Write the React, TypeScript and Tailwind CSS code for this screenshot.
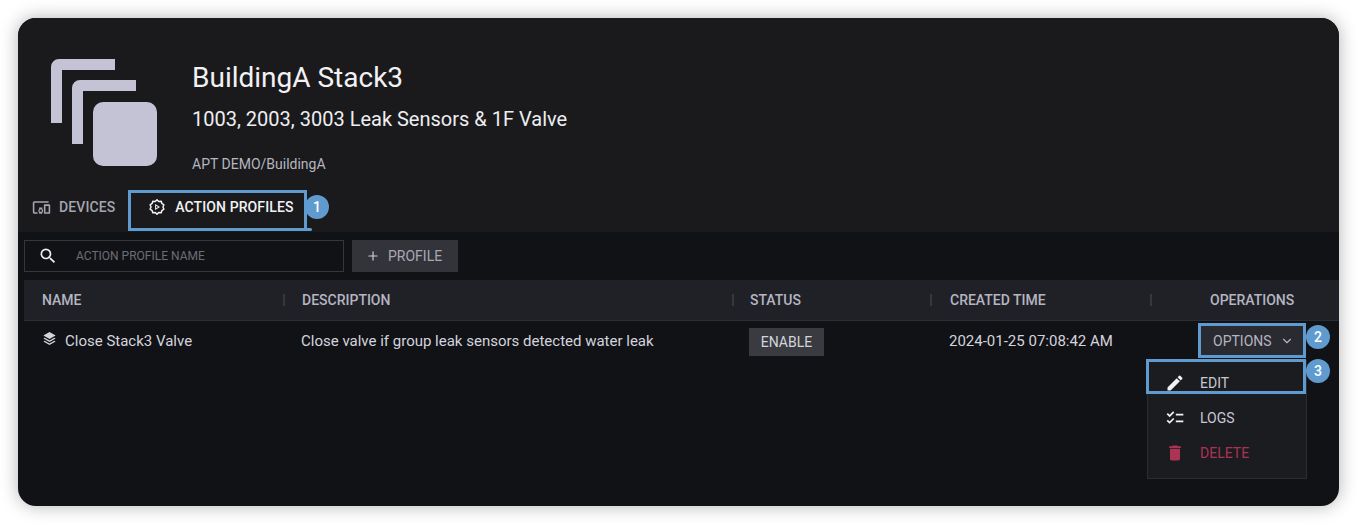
import { MdDelete, MdEdit, MdOutlineDevicesOther, MdOutlineChecklist, MdSearch } from "react-icons/md";
import { ChevronDown, Plus } from "lucide-react";

const columns = [
  { label: "NAME", sep: false, pad: "pl-[18px]" },
  { label: "DESCRIPTION", sep: true, pad: "pl-[17px]" },
  { label: "STATUS", sep: true, pad: "pl-[16px]" },
  { label: "CREATED TIME", sep: true, pad: "pl-[18px]" },
  { label: "OPERATIONS", sep: true, pad: "pl-[58px]" },
];

const gridCols = "grid grid-cols-[259px_449px_198px_220px_1fr]";

function ActionIcon() {
  return (
    <svg viewBox="0 0 24 24" className="h-[18px] w-[18px]" fill="none" stroke="currentColor" strokeWidth="2">
      <path
        strokeLinejoin="round"
        d="M12 2.5l2.4 2.1 3.2-.3.9 3 2.7 1.8-1.2 2.9 1.2 2.9-2.7 1.8-.9 3-3.2-.3L12 21.5l-2.4-2.1-3.2.3-.9-3-2.7-1.8 1.2-2.9-1.2-2.9 2.7-1.8.9-3 3.2.3z"
      />
      <path d="M9.5 8l6.5 4-6.5 4z" fill="currentColor" stroke="none" />
      <path d="M10.8 10.4l2.7 1.6-2.7 1.6z" fill="#1a1a1c" stroke="none" />
    </svg>
  );
}

function StackLogo() {
  return (
    <svg viewBox="0 0 108 108" className="h-[108px] w-[108px] shrink-0" fill="#c4c3d6">
      <path d="M0 64V8a8 8 0 0 1 8-8h56v11H11v53z" />
      <path d="M21 85V29a8 8 0 0 1 8-8h56v11H32v53z" />
      <rect x="42" y="43" width="64" height="64" rx="10" />
    </svg>
  );
}

function LayersIcon() {
  return (
    <svg viewBox="0 0 16 16" className="mb-[5px] h-[15px] w-[15px]" fill="currentColor">
      <path d="M8 1l6.5 3.7L8 8.4 1.5 4.7z" />
      <path d="M2.9 7.1L8 10l5.1-2.9 1.4.9L8 11.7 1.5 8z" />
      <path d="M2.9 10.4L8 13.3l5.1-2.9 1.4.9L8 15 1.5 11.3z" />
    </svg>
  );
}

function Badge({ n, className }: { n: number; className: string }) {
  return (
    <span
      className={`absolute flex h-6 w-6 items-center justify-center rounded-full bg-[#5f9bcf] text-sm font-medium text-white ${className}`}
    >
      {n}
    </span>
  );
}

export default function App() {
  return (
    <div className="h-[524px] w-[1357px] overflow-hidden bg-white p-[18px] font-['Roboto',sans-serif]">
      <div className="relative flex h-[488px] flex-col overflow-hidden rounded-[18px] bg-[#111216] shadow-[0_0_18px_rgba(0,0,0,0.3)]">
        <div className="h-[214px] shrink-0 bg-[#1a1a1c]">
          <div className="flex h-[168px] gap-[33px] pl-[33px] pt-[41px]">
            <StackLogo />
            <div className="flex flex-col pt-[1px]">
              <h1 className="text-[28px] leading-9 text-[#f2f2f5]">BuildingA Stack3</h1>
              <p className="mt-[11px] text-[20px] leading-6 text-[#eeeef2]">1003, 2003, 3003 Leak Sensors &amp; 1F Valve</p>
              <p className="mt-[25px] text-sm leading-4 text-[#b5b5c0]">APT DEMO/BuildingA</p>
            </div>
          </div>
          <div className="flex h-[42px] items-center pl-[14px] text-sm font-medium tracking-[0.1px]">
            <div className="flex items-center gap-2 text-[#a5a5b0]">
              <MdOutlineDevicesOther className="h-[19px] w-[19px]" />
              <span>DEVICES</span>
            </div>
            <div className="ml-[33px] flex items-center gap-[9px] text-[#f2f2f5]">
              <ActionIcon />
              <span>ACTION PROFILES</span>
            </div>
          </div>
        </div>

        <div className="flex gap-2 pl-[6px] pt-2">
          <div className="flex h-8 w-80 items-center border border-[#35363b] bg-[#111216] pl-[13px]">
            <MdSearch className="h-5 w-5 text-[#eeeef2]" />
            <span className="ml-[18px] text-xs text-[#6c6d75]">ACTION PROFILE NAME</span>
          </div>
          <div className="flex h-8 w-[106px] items-center gap-[8px] bg-[#33343a] pl-[14px] text-sm text-[#a8a8b4]">
            <Plus className="h-[14px] w-[14px] text-[#d0d0da]" />
            <span>PROFILE</span>
          </div>
        </div>

        <div className="ml-[6px] mt-2 flex-1">
          <div className={`${gridCols} h-[41px] items-center border-b border-[#2c2d32] bg-[#202126] text-sm font-medium text-[#b5b5c2]`}>
            {columns.map((c) => (
              <div key={c.label} className="flex items-center">
                {c.sep && <span className="h-3 w-[2px] bg-[#36373c]" />}
                <span className={c.pad}>{c.label}</span>
              </div>
            ))}
          </div>
          <div className={`${gridCols} h-10 items-center text-[15px] text-[#d4d4de]`}>
            <div className="flex items-center pl-[18px]">
              <LayersIcon />
              <span className="ml-2">Close Stack3 Valve</span>
            </div>
            <div className="pl-[18px]">Close valve if group leak sensors detected water leak</div>
            <div className="flex pl-[17px] pt-px">
              <span className="flex h-7 w-[75px] items-center justify-center bg-[#3a3b40] text-sm">ENABLE</span>
            </div>
            <div className="pl-[19px]">2024-01-25 07:08:42 AM</div>
            <div className="pl-[49px]">
              <span className="inline-flex h-[30px] w-[105px] items-center gap-2 bg-[#2a2b30] pl-[14px] text-sm text-[#b5b5c2]">
                OPTIONS
                <ChevronDown className="h-[14px] w-[14px]" />
              </span>
            </div>
          </div>
        </div>

        <div className="absolute left-[1129px] top-[342px] flex h-[119px] w-40 flex-col border border-[#2c2d32] bg-[#1b1c20] pl-[17px] pt-1 text-sm">
          <div className="flex h-[35px] items-center gap-[15px] text-[#c8c8d4]">
            <MdEdit className="h-5 w-5 text-[#f2f2f5]" />
            <span>EDIT</span>
          </div>
          <div className="flex h-[35px] items-center gap-[15px] text-[#c8c8d4]">
            <MdOutlineChecklist className="h-5 w-5 text-[#f2f2f5]" />
            <span>LOGS</span>
          </div>
          <div className="flex h-[35px] items-center gap-[15px] text-[#ad3354]">
            <MdDelete className="h-5 w-5" />
            <span>DELETE</span>
          </div>
        </div>

        <div className="absolute left-[110px] top-[172px] h-[41px] w-[179px] border-[3px] border-[#5f9bcf]" />
        <div className="absolute left-[288px] top-[210px] h-[3px] w-[6px] rounded-r-full bg-[#5f9bcf]" />
        <div className="absolute left-[1180px] top-[305px] h-[35px] w-[108px] border-[3px] border-[#5f9bcf]" />
        <div className="absolute left-[1128px] top-[341px] h-[35px] w-[160px] border-[3px] border-[#5f9bcf]" />
        <Badge n={1} className="left-[287px] top-[177px]" />
        <Badge n={2} className="left-[1288px] top-[307px]" />
        <Badge n={3} className="left-[1288px] top-[341px]" />
      </div>
    </div>
  );
}
